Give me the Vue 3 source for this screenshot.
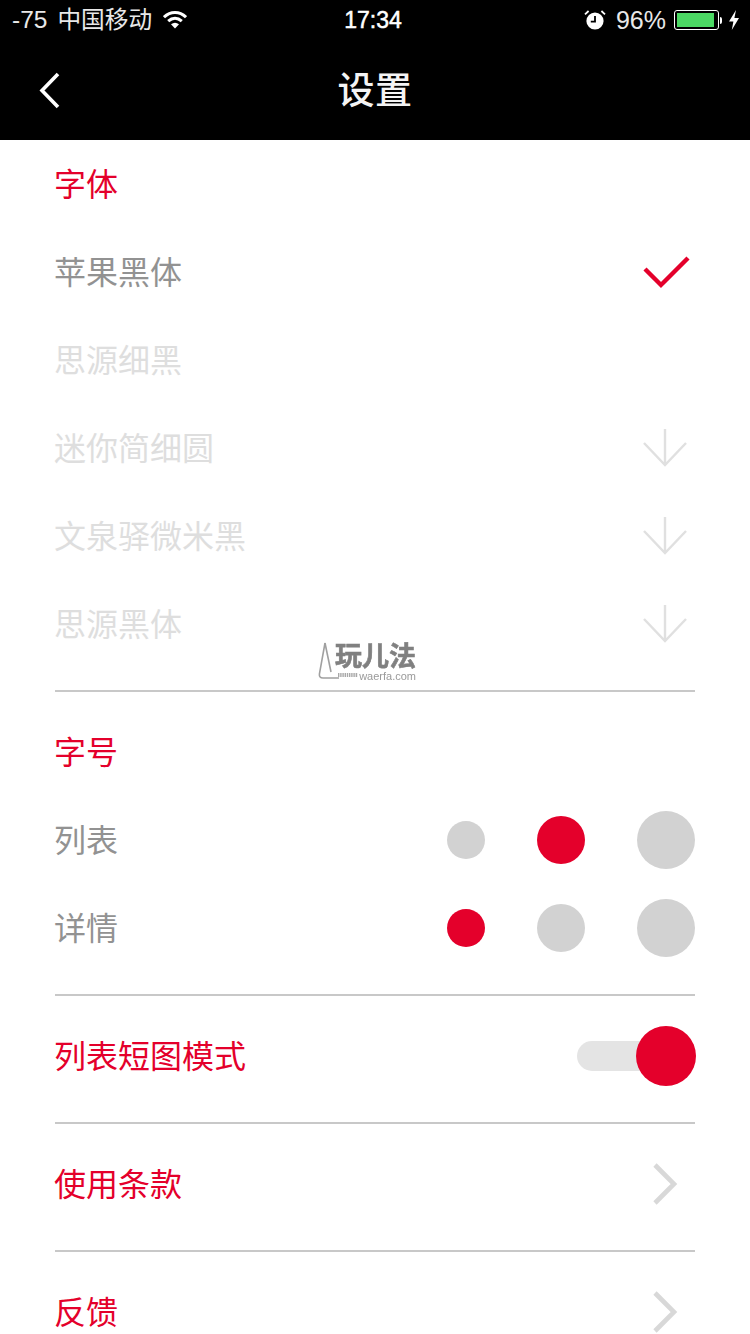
<template>
  <div class="page">
    <header class="top">
      <div class="status">
        <div class="status-left">
          <span class="signal">-75</span>
          <span class="carrier">中国移动</span>
          <svg class="wifi" viewBox="0 0 24 18" width="24" height="18">
            <path d="M1 6.2C7.5 0 16.5 0 23 6.2" fill="none" stroke="#fff" stroke-width="3" />
            <path d="M5.2 10.2C9.4 6.4 14.6 6.4 18.8 10.2" fill="none" stroke="#fff" stroke-width="3" />
            <path d="M8 13.2C10.6 11.2 13.4 11.2 16 13.2L12 17.6Z" fill="#fff" />
          </svg>
        </div>
        <div class="clock">17:34</div>
        <div class="status-right">
          <svg class="alarm" viewBox="0 0 22 22" width="22" height="22">
            <circle cx="11" cy="12" r="8.6" fill="#fff" />
            <path d="M11 7V12.6H6.8" fill="none" stroke="#000" stroke-width="1.8" />
            <path d="M1 5.4L4.6 2M21 5.4L17.4 2" stroke="#fff" stroke-width="1.8" />
          </svg>
          <span class="percent">96%</span>
          <div class="battery"><div class="battery-fill" :style="{ width: battery + '%' }"></div></div>
          <div class="battery-nub"></div>
          <svg class="bolt" viewBox="0 0 12 20" width="12" height="20">
            <path d="M8 0L1 11.4H5.4L3.8 20L11 8H6.4Z" fill="#fff" />
          </svg>
        </div>
      </div>
      <div class="nav">
        <svg class="back" viewBox="0 0 26 38" width="26" height="38">
          <path d="M21 3L5 19.5L21 36" fill="none" stroke="#fff" stroke-width="3.6" />
        </svg>
        <h1 class="title">设置</h1>
      </div>
    </header>

    <main class="content">
      <section class="block block-fonts">
        <div class="row heading"><span>字体</span></div>
        <div v-for="f in fonts" :key="f.name" class="row" :class="{ muted: !f.active }">
          <span>{{ f.name }}</span>
          <svg v-if="f.icon === 'check'" class="icon" viewBox="0 0 52 44" width="52" height="44">
            <path d="M2 19L18 35L45 8" fill="none" stroke="#e4002b" stroke-width="4.4" />
          </svg>
          <svg v-else-if="f.icon === 'down'" class="icon" viewBox="0 0 52 44" width="52" height="44">
            <path d="M22 3V38M1 17L22 39L43 17" fill="none" stroke="#e0e0e0" stroke-width="2.4" />
          </svg>
        </div>
      </section>

      <section class="block block-sizes">
        <div class="row heading"><span>字号</span></div>
        <div v-for="s in sizes" :key="s.name" class="row">
          <span>{{ s.name }}</span>
          <div class="dots">
            <i
              v-for="(d, i) in dotSizes"
              :key="d"
              class="dot"
              :class="['dot-' + d, { on: s.picked === i }]"
            ></i>
          </div>
        </div>
      </section>

      <section class="block tall">
        <div class="row heading">
          <span>列表短图模式</span>
          <div class="toggle"><i class="knob"></i></div>
        </div>
      </section>

      <section v-for="l in links" :key="l" class="block tall">
        <div class="row heading">
          <span>{{ l }}</span>
          <svg class="chev" viewBox="0 0 28 44" width="28" height="44">
            <path d="M4 3L23 22L4 41" fill="none" stroke="#d8d8d8" stroke-width="4.6" />
          </svg>
        </div>
      </section>
    </main>

    <div class="mark">
      <svg class="mark-icon" viewBox="0 0 44 38" width="44" height="38">
        <path d="M8 1L2.4 32Q2 36 6 36H22" fill="none" stroke="#a0a0a0" stroke-width="1.6" />
        <path d="M8 1L14 30" fill="none" stroke="#a0a0a0" stroke-width="1.6" />
        <path d="M21 33H41" fill="none" stroke="#a8a8a8" stroke-width="4" stroke-dasharray="1.4 0.8" />
      </svg>
      <div class="mark-text">
        <div class="mark-name">玩儿法</div>
        <div class="mark-url">waerfa.com</div>
      </div>
    </div>
  </div>
</template>

<script setup>
const battery = 96;

const fonts = [
  { name: "苹果黑体", active: true, icon: "check" },
  { name: "思源细黑", active: false, icon: "" },
  { name: "迷你简细圆", active: false, icon: "down" },
  { name: "文泉驿微米黑", active: false, icon: "down" },
  { name: "思源黑体", active: false, icon: "down" },
];

const sizes = [
  { name: "列表", picked: 1 },
  { name: "详情", picked: 0 },
];

const dotSizes = ["s", "m", "l"];
const links = ["使用条款", "反馈"];
</script>

<style>
html,
body {
  margin: 0;
  background: #fff;
}
</style>

<style scoped>
.page {
  position: relative;
  width: 750px;
  height: 1334px;
  overflow: hidden;
  background: #fff;
  font-family: "Liberation Sans", "Noto Sans CJK SC", sans-serif;
}

/* 顶部 */
.top {
  background: #000;
  color: #fff;
  height: 140px;
}

.status {
  display: grid;
  grid-template-columns: 1fr auto 1fr;
  align-items: center;
  height: 40px;
  padding: 0 10px 0 12px;
}

.status-left,
.status-right {
  display: flex;
  align-items: center;
}

.status-right {
  justify-content: flex-end;
}

.signal {
  font-size: 24.5px;
  color: #e8e8e8;
}

.carrier {
  margin-left: 10px;
  font-size: 23.7px;
  line-height: 24px;
  color: #e8e8e8;
}

.wifi {
  margin-left: 11px;
}

.clock {
  font-size: 23px;
  font-weight: 400;
  -webkit-text-stroke: 0.5px #fff;
  margin-right: 6px;
}

.alarm {
  margin-right: 10px;
}

.percent {
  font-size: 25px;
  color: #e8e8e8;
  margin-right: 8px;
}

.battery {
  box-sizing: border-box;
  width: 45px;
  height: 20px;
  padding: 2px;
  border: 1px solid #fff;
  border-radius: 3px;
}

.battery-fill {
  height: 100%;
  background: #4cd964;
}

.battery-nub {
  width: 2px;
  height: 7px;
  margin-left: 1px;
  background: #fff;
  border-radius: 0 2px 2px 0;
}

.bolt {
  margin-left: 6px;
}

.nav {
  display: flex;
  justify-content: center;
  align-items: center;
  position: relative;
  height: 100px;
}

.back {
  position: absolute;
  left: 37px;
  top: 31px;
}

.title {
  margin: 4px 0 0;
  font-size: 37px;
  line-height: 50px;
  font-weight: 500;
  letter-spacing: 0.5px;
  color: #f4f4f4;
}

/* 内容 */
.content {
  padding: 0 55px;
}

.block {
  border-bottom: 2px solid #c8c8c8;
}

.block:last-child {
  border-bottom: 0;
}

.block-fonts {
  padding-bottom: 22px;
}

.block-sizes {
  padding: 16px 0 22px;
}

.tall {
  padding-bottom: 6px;
}

.tall .row {
  height: 120px;
}

.row {
  display: flex;
  justify-content: space-between;
  align-items: center;
  height: 88px;
  font-size: 32px;
  color: #929292;
}

.row > span {
  margin: 0 0 4px -1px;
}

.heading {
  color: #e4002b;
}

.muted {
  color: #dedede;
}

.dots {
  display: flex;
  align-items: center;
  gap: 52px;
}

.dot {
  display: block;
  border-radius: 50%;
  background: #d2d2d2;
}

.dot.on {
  background: #e4002b;
}

.dot-s {
  width: 38px;
  height: 38px;
}

.dot-m {
  width: 48px;
  height: 48px;
}

.dot-l {
  width: 58px;
  height: 58px;
}

.toggle {
  display: flex;
  justify-content: flex-end;
  align-items: center;
  width: 119px;
  height: 30px;
  margin-right: -1px;
  border-radius: 15px;
  background: linear-gradient(to right, #e4e4e4 75%, transparent 75%);
}

.knob {
  display: block;
  flex: none;
  width: 60px;
  height: 60px;
  border-radius: 50%;
  background: #e4002b;
}

.chev {
  margin-right: 16px;
}

/* 水印 */
.mark {
  position: absolute;
  left: 317px;
  top: 642px;
  display: flex;
  align-items: flex-start;
  filter: blur(0.4px);
}

.mark-text {
  margin-left: -26px;
}

.mark-name {
  font-size: 27px;
  line-height: 30px;
  font-weight: 700;
  color: #808080;
  -webkit-text-stroke: 0.6px #808080;
}

.mark-url {
  width: 82px;
  padding-right: 1px;
  box-sizing: border-box;
  text-align: right;
  font-size: 11px;
  line-height: 9px;
  color: #9a9a9a;
}
</style>
